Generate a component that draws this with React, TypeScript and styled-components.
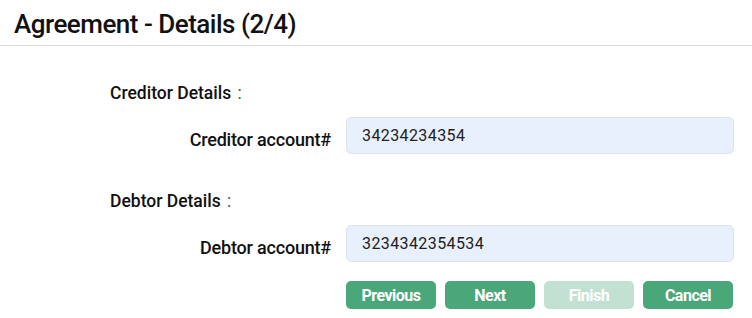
import React from 'react';
import styled, { createGlobalStyle } from 'styled-components';

const GlobalStyle = createGlobalStyle`
  body {
    margin: 0;
    background: #fff;
    font-family: Roboto, 'Noto Sans', sans-serif;
    color: #111;
  }
`;

const Header = styled.div`
  height: 45px;
  border-bottom: 1px solid #dcdcdc;
  padding-left: 14px;
  display: flex;
  align-items: center;
`;

const Title = styled.h1`
  margin: 0;
  font-size: 26px;
  font-weight: 500;
  letter-spacing: -0.5px;
  padding-top: 2px;
`;

const Form = styled.div`
  display: grid;
  grid-template-columns: 221px 388px;
  column-gap: 15px;
  padding: 0 0 0 110px;
`;

const SectionTitle = styled.div<{ $top: number }>`
  grid-column: 1 / span 2;
  font-size: 17.5px;
  font-weight: 500;
  margin-top: ${p => p.$top}px;
  height: 24px;
  line-height: 24px;
  letter-spacing: 0;

  span {
    color: #555;
    font-weight: 400;
    margin-left: 2px;
  }
`;

const Label = styled.label`
  text-align: right;
  font-size: 18px;
  font-weight: 500;
  letter-spacing: -0.2px;
  align-self: center;
  padding-top: 20px;
`;

const Input = styled.input`
  box-sizing: border-box;
  height: 37px;
  margin-top: 12px;
  padding: 0 15px;
  border: 1px solid #dde3ea;
  border-radius: 5px;
  background: #e8f0fe;
  font-family: Roboto, 'Noto Sans', sans-serif;
  font-size: 16px;
  letter-spacing: 0.4px;
  color: #222;
  outline: none;
`;

const Buttons = styled.div`
  grid-column: 2;
  display: flex;
  gap: 9px;
  margin-top: 19px;
`;

const Button = styled.button<{ $disabled?: boolean }>`
  width: 90px;
  height: 28px;
  border: none;
  border-radius: 5px;
  background: ${p => (p.$disabled ? '#c2e1d2' : '#4aa77a')};
  color: #fff;
  font-family: Roboto, 'Noto Sans', sans-serif;
  font-size: 16px;
  font-weight: 700;
  letter-spacing: -0.5px;
  padding: 0;
`;

export default function App() {
  return (
    <>
      <GlobalStyle />
      <Header>
        <Title>Agreement - Details (2/4)</Title>
      </Header>
      <Form>
        <SectionTitle $top={35}>
          Creditor Details <span>:</span>
        </SectionTitle>
        <Label>Creditor account#</Label>
        <Input defaultValue="34234234354" />
        <SectionTitle $top={35}>
          Debtor Details <span>:</span>
        </SectionTitle>
        <Label>Debtor account#</Label>
        <Input defaultValue="3234342354534" />
        <div />
        <Buttons>
          <Button>Previous</Button>
          <Button>Next</Button>
          <Button $disabled>Finish</Button>
          <Button>Cancel</Button>
        </Buttons>
      </Form>
    </>
  );
}
